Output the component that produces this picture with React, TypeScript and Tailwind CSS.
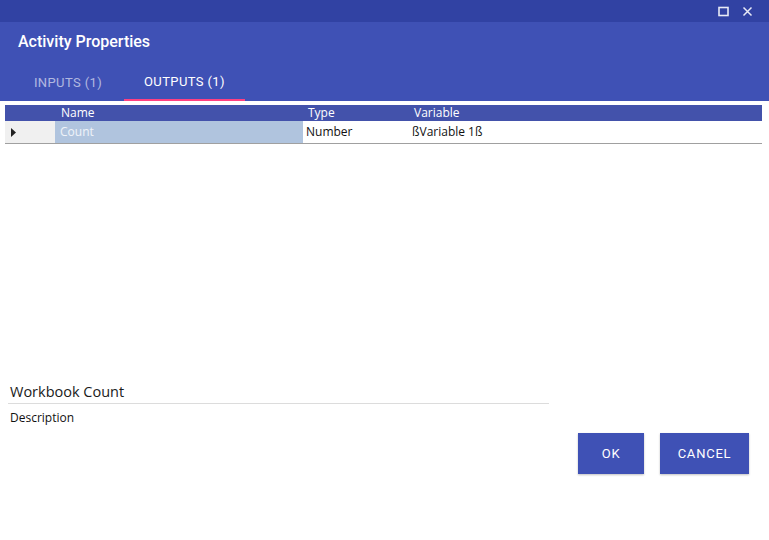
import React from "react";

const ROBOTO = { fontFamily: "Roboto, 'Noto Sans', sans-serif" };

function TitleBar() {
  return (
    <div className="flex h-[22px] items-center justify-end gap-[13px] bg-[#3142a3] pr-[16px]">
      <svg width="11" height="11" viewBox="0 0 11 11">
        <rect x="1" y="1.5" width="9" height="8" fill="none" stroke="#e8eaf6" strokeWidth="1.6" />
      </svg>
      <svg width="11" height="11" viewBox="0 0 11 11">
        <path d="M1.5 1.5 L9.5 9.5 M9.5 1.5 L1.5 9.5" stroke="#e8eaf6" strokeWidth="1.5" />
      </svg>
    </div>
  );
}

function Header() {
  return (
    <div className="bg-[#3f51b5]" style={ROBOTO}>
      <div className="flex h-[42px] items-center pb-[2px] pl-[18px] text-[16px] font-medium text-white">
        Activity Properties
      </div>
      <div className="flex h-[37px] pl-[4px]">
        <div className="flex w-[120px] items-center justify-center pl-[8px] text-[13px] tracking-[0.03em] text-white/60">
          INPUTS (1)
        </div>
        <div className="flex w-[121px] flex-col">
          <div className="flex flex-1 items-center justify-center text-[13px] tracking-[0.03em] text-white">
            OUTPUTS (1)
          </div>
          <div className="h-[2px] bg-[#ff4081]" />
        </div>
      </div>
    </div>
  );
}

function Grid() {
  return (
    <div
      className="mx-[5px] mt-[4px] w-[757px] border-b border-[#a0a0a0] text-[12px]"
      style={{ fontFamily: "'Open Sans', 'Noto Sans', sans-serif" }}
    >
      <div className="flex h-[16px] items-center bg-[#4352ab] leading-none text-white">
        <div className="w-[50px]" />
        <div className="w-[248px] pl-[6px]">Name</div>
        <div className="w-[106px] pl-[5px]">Type</div>
        <div className="flex-1 pl-[5px]">Variable</div>
      </div>
      <div className="flex h-[22px] items-center text-[#111]">
        <div className="flex h-full w-[50px] items-center bg-[#f0f0f0] pl-[6px]">
          <svg width="5" height="9" viewBox="0 0 5 9">
            <path d="M0 0 L5 4.5 L0 9 Z" fill="#222" />
          </svg>
        </div>
        <div className="flex h-full w-[248px] items-center bg-[#b0c4de] pl-[5px] text-white/80">Count</div>
        <div className="w-[106px] pl-[3px]">Number</div>
        <div className="flex-1 pl-[3px]">ßVariable 1ß</div>
      </div>
    </div>
  );
}

export default function App() {
  return (
    <div className="flex h-[540px] w-[769px] flex-col bg-white">
      <TitleBar />
      <Header />
      <Grid />
      <div className="flex flex-1 items-start justify-between pt-[238px]">
        <div className="ml-[8px] w-[541px]" style={{ fontFamily: "'Open Sans', 'Noto Sans', sans-serif" }}>
          <div className="border-b border-[#dcdcdc] pb-[1px] pl-[2px] text-[14.5px] leading-[20px] text-[#1a1a1a]">
            Workbook Count
          </div>
          <div className="pl-[2px] pt-[5px] text-[12px] text-[#111]">Description</div>
        </div>
        <div className="mr-[20px] mt-[51px] flex gap-[16px]" style={ROBOTO}>
          <button className="h-[41px] w-[66px] bg-[#3f51b5] text-[13px] tracking-[0.06em] text-white shadow-[0_1px_2px_rgba(0,0,0,0.25)]">
            OK
          </button>
          <button className="h-[41px] w-[89px] bg-[#3f51b5] text-[13px] tracking-[0.06em] text-white shadow-[0_1px_2px_rgba(0,0,0,0.25)]">
            CANCEL
          </button>
        </div>
      </div>
    </div>
  );
}
